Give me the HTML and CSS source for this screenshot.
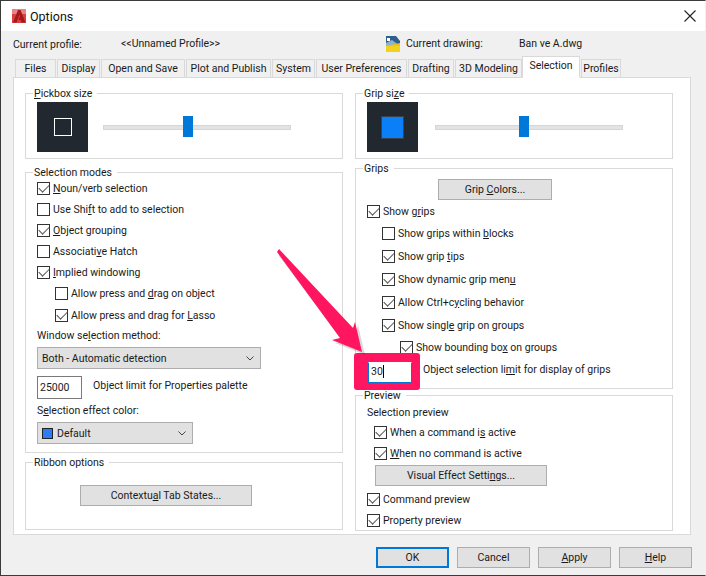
FILE: index.html
```html
<!DOCTYPE html>
<html lang="en">
<head>
<meta charset="utf-8">
<title>Options</title>
<link rel="stylesheet" href="styles.css">
</head>
<body>
<div class="dialog">
  <header class="titlebar">
    <svg class="app-icon" width="16" height="16" viewBox="0 0 16 16"><rect x="1" y="1" width="14" height="14" fill="#d9413f"/><rect x="1" y="1" width="14" height="5" fill="#e98482"/><path d="M2 14.5 7 2h2.5L14.5 14.5h-4L9.7 12H7.5l1-3h.6L8.4 6.5 5.6 14.5z" fill="#a8171c"/></svg>
    <span class="title">Options</span>
    <svg class="close" width="12" height="12" viewBox="0 0 12 12"><path d="M.5.5l11 11M11.5.5l-11 11" stroke="#222" stroke-width="1.1" fill="none"/></svg>
  </header>
  <div class="content">
    <div class="profile">
      <span class="p-label">Current profile:</span>
      <span class="p-name">&lt;&lt;Unnamed Profile&gt;&gt;</span>
      <svg class="dwg-icon" width="16" height="17" viewBox="0 0 16 17"><rect x="1" y="11" width="14" height="6" fill="#f2d21e"/><path d="M1 11V1h10l4 5v5z" fill="#2f5f8a"/><path d="M1 11 1 8l6-3 8 6z" fill="#8fb3cf"/><path d="M2 3h3v3H2z" fill="#fff"/><path d="M1 11l14-3v3z" fill="#e8c51a"/></svg>
      <span class="d-label">Current drawing:</span>
      <span class="d-name">Ban ve A.dwg</span>
    </div>
    <nav class="tabs">
      <span class="tab t-files">Files</span>
      <span class="tab t-display">Display</span>
      <span class="tab t-open">Open and Save</span>
      <span class="tab t-plot">Plot and Publish</span>
      <span class="tab t-system">System</span>
      <span class="tab t-user">User Preferences</span>
      <span class="tab t-draft">Drafting</span>
      <span class="tab t-model">3D Modeling</span>
      <span class="tab t-sel active">Selection</span>
      <span class="tab t-prof">Profiles</span>
    </nav>
    <main class="panel">
      <div class="col">
        <fieldset class="group g-pick">
          <legend><u>P</u>ickbox size</legend>
          <div class="size-row">
            <div class="swatch"><span class="pickbox"></span></div>
            <div class="slider s-left"><span class="thumb"></span></div>
          </div>
        </fieldset>
        <fieldset class="group g-modes">
          <legend>Selection modes</legend>
          <label class="row first"><span class="cb on"></span><span><u>N</u>oun/verb selection</span></label>
          <label class="row"><span class="cb"></span><span>Use Shi<u>f</u>t to add to selection</span></label>
          <label class="row"><span class="cb on"></span><span><u>O</u>bject grouping</span></label>
          <label class="row"><span class="cb"></span><span>Associati<u>v</u>e Hatch</span></label>
          <label class="row"><span class="cb on"></span><span><u>I</u>mplied windowing</span></label>
          <label class="row in1"><span class="cb"></span><span>Allow press and <u>d</u>rag on object</span></label>
          <label class="row r22 in1"><span class="cb on"></span><span>Allow press and drag for <u>L</u>asso</span></label>
          <div class="caption c-win">Window se<u>l</u>ection method:</div>
          <div class="select sel-win"><span>Both - Automatic detection</span><svg class="chev" width="8" height="5" viewBox="0 0 8 5"><path d="M.5.5 4 4 7.500.5" stroke="#444" fill="none"/></svg></div>
          <div class="limit-row"><span class="input i-25">25000</span><span class="limit-label">Ob<u>j</u>ect limit for Properties palette</span></div>
          <div class="caption c-eff">S<u>e</u>lection effect color:</div>
          <div class="select sel-eff"><span class="color"></span><span>Default</span><svg class="chev" width="8" height="5" viewBox="0 0 8 5"><path d="M.5.5 4 4 7.500.5" stroke="#444" fill="none"/></svg></div>
        </fieldset>
        <fieldset class="group g-ribbon">
          <legend>Ribbon options</legend>
          <div class="btn b-ctx">Contextu<u>a</u>l Tab States...</div>
        </fieldset>
      </div>
      <div class="col">
        <fieldset class="group g-pick">
          <legend>Grip si<u>z</u>e</legend>
          <div class="size-row">
            <div class="swatch"><span class="gripbox"></span></div>
            <div class="slider s-right"><span class="thumb"></span></div>
          </div>
        </fieldset>
        <fieldset class="group g-grips">
          <legend>Grips</legend>
          <div class="btn b-grip">Grip <u>C</u>olors...</div>
          <label class="row r-sg"><span class="cb on"></span><span>Show g<u>r</u>ips</span></label>
          <label class="row r23 in-g"><span class="cb"></span><span>Show grips within <u>b</u>locks</span></label>
          <label class="row r23 in-g"><span class="cb on"></span><span>Show grip <u>t</u>ips</span></label>
          <label class="row r23 in-g"><span class="cb on"></span><span>Show dynamic grip men<u>u</u></span></label>
          <label class="row r23 in-g"><span class="cb on"></span><span>Allow Ctrl+c<u>y</u>cling behavior</span></label>
          <label class="row r22 in-g"><span class="cb on"></span><span>Show singl<u>e</u> grip on groups</span></label>
          <label class="row r23 in-gg"><span class="cb on"></span><span>Show bounding bo<u>x</u> on groups</span></label>
          <div class="limit-row l-grips"><span class="input i-30">30<i class="caret"></i></span><span class="limit-label">Object selection li<u>m</u>it for display of grips</span></div>
        </fieldset>
        <fieldset class="group g-preview">
          <legend>Preview</legend>
          <div class="caption c-prev">Selection preview</div>
          <label class="row in-p"><span class="cb on"></span><span>When a command i<u>s</u> active</span></label>
          <label class="row in-p"><span class="cb on"></span><span><u>W</u>hen no command is active</span></label>
          <div class="btn b-vis">Visual Effect Setti<u>n</u>gs...</div>
          <label class="row r-cmd"><span class="cb on"></span><span>Command preview</span></label>
          <label class="row"><span class="cb on"></span><span>Property preview</span></label>
        </fieldset>
      </div>
    </main>
    <footer class="actions">
      <div class="btn action default">OK</div>
      <div class="btn action">Cancel</div>
      <div class="btn action"><u>A</u>pply</div>
      <div class="btn action"><u>H</u>elp</div>
    </footer>
  </div>
  <div class="callout"></div>
  <svg class="arrow" width="100" height="120" viewBox="0 0 100 120">
    <polygon class="arrow-shadow" points="1,3 78,81 80,75 87,105 57,93 65,91 1,6"/>
    <polygon class="arrow-body" points="1,-1 75,78 77,72 84,102 54,90 62,88 -1,2"/>
  </svg>
</div>
</body>
</html>
```
FILE: styles.css
```css
* { box-sizing: border-box; }
html, body { margin: 0; padding: 0; }
body {
  width: 706px;
  height: 576px;
  overflow: hidden;
  font-family: Roboto, "Noto Sans", sans-serif;
  font-size: 10.5px;
  color: #1a1a1a;
}
u { text-underline-offset: 1px; }
.dialog {
  position: relative;
  width: 706px;
  height: 576px;
  background: #f0f0f0;
  border-top: 1px solid #3a3a3a;
  border-left: 1px solid #3a3a3a;
  border-right: 1px solid #f0f0f0;
  border-bottom: 1px solid #3a3a3a;
  display: flex;
  flex-direction: column;
}
.titlebar {
  height: 30px;
  flex: none;
  background: #fff;
  display: flex;
  align-items: center;
  padding: 0 9px 0 10px;
}
.app-icon { flex: none; }
.title { margin-left: 3px; font-size: 12.5px; color: #111; }
.close { margin-left: auto; }
.content { flex: 1; padding: 0 13px 0 12px; display: flex; flex-direction: column; }
.profile { height: 28px; display: flex; align-items: center; padding-bottom: 3px; }
.p-label { width: 108px; padding-top: 2px; }
.p-name { width: 264px; }
.dwg-icon { flex: none; width: 16px; margin-right: 5px; }
.d-label { width: 113px; }
.tabs { display: flex; height: 18px; padding-left: 2px; align-items: flex-end; }
.tab {
  height: 19px;
  margin-right: 1px;
  margin-bottom: -1px;
  background: #f0f0f0;
  border: 1px solid #d9d9d9;
  display: flex;
  align-items: center;
  justify-content: center;
  white-space: nowrap;
}
.t-files { width: 41px; }
.t-display { width: 43px; }
.t-open { width: 84px; }
.t-plot { width: 85px; }
.t-system { width: 43px; }
.t-user { width: 91px; }
.t-draft { width: 46px; }
.t-model { width: 67px; margin-right: 0; }
.t-sel { width: 58px; }
.t-prof { width: 40px; }
.tab.active {
  height: 22px;
  background: #fff;
  border-bottom-color: #fff;
  position: relative;
  z-index: 1;
  padding-bottom: 3px;
}
.panel {
  width: 678px;
  height: 458px;
  background: #fff;
  border: 1px solid #d9d9d9;
  padding: 7px 17px 0 11px;
  display: grid;
  grid-template-columns: 318px 318px;
  column-gap: 12px;
}
.col { display: flex; flex-direction: column; }
fieldset.group {
  margin: 0;
  padding: 0 0 0 11px;
  border: 1px solid #d9d9d9;
  min-width: 0;
}
legend { padding: 2px 5px 0 1px; margin-left: -4px; line-height: 14px; }
fieldset.g-pick { height: 74px; }
fieldset.g-modes { height: 289px; margin-top: 5px; }
fieldset.g-ribbon { height: 76px; margin-top: 1px; }
fieldset.g-grips { height: 229px; margin-top: 1px; }
fieldset.g-preview { height: 144px; margin-top: -2px; }
.size-row { display: flex; align-items: center; margin-top: 1px; }
.swatch {
  width: 51px; height: 50px; background: #212830;
  display: flex; align-items: center; justify-content: center;
  flex: none;
}
.pickbox { width: 18px; height: 18px; border: 1px solid #fff; }
.gripbox { width: 21px; height: 21px; background: #0a80f8; border: 1px solid #3a4048; box-sizing: content-box; }
.slider {
  height: 5px; background: #e3e3e3; border: 1px solid #d6d6d6;
  width: 188px; position: relative;
}
.s-left { margin-left: 15px; }
.s-right { margin-left: 17px; }
.thumb {
  position: absolute; left: 79px; top: -10px;
  width: 10px; height: 21px; background: #0078d7;
}
.s-right .thumb { left: 83px; }
.row { display: flex; align-items: center; height: 21px; white-space: nowrap; }
.row.first { margin-top: -2px; }
.r22 { height: 22px; }
.r23 { height: 23px; }
.cb {
  width: 13px; height: 13px; border: 1px solid #333; background: #fff;
  margin-right: 3px; flex: none; position: relative; display: block;
}
.cb.on::after {
  content: "";
  position: absolute; left: 1px; top: 1px;
  width: 9px; height: 5px;
  border-left: 1px solid #555; border-bottom: 1px solid #555;
  transform: rotate(-45deg);
  transform-origin: center;
}
.in1 { padding-left: 18px; }
.in-g { padding-left: 15px; }
.in-gg { padding-left: 33px; }
.in-p { padding-left: 7px; }
.caption { line-height: 14px; }
.c-win { margin-top: 3px; }
.select {
  height: 22px;
  background: #e1e1e1;
  border: 1px solid #adadad;
  display: flex;
  align-items: center;
  padding: 0 6px 0 4px;
}
.sel-win { width: 224px; margin-top: 4px; }
.sel-eff { width: 156px; margin-top: 4px; }
.chev { margin-left: auto; }
.color { width: 9px; height: 9px; background: #2e7bf6; border: 1px solid #222; margin-right: 4px; box-sizing: content-box; }
.limit-row { display: flex; align-items: center; margin-top: 7px; }
.limit-row .input { margin-right: 11px; }
.limit-label { padding-bottom: 4px; }
.l-grips .limit-label { padding-bottom: 6px; }
.input {
  display: flex; align-items: center;
  height: 23px; width: 45px;
  border: 1px solid #7a7a7a; background: #fff; padding-left: 2px;
}
.c-eff { margin-top: 5px; }
.btn {
  background: #e1e1e1;
  border: 1px solid #adadad;
  display: flex;
  align-items: center;
  justify-content: center;
  height: 21px;
  white-space: pre;
}
.b-ctx { width: 172px; margin: 15px 0 0 43px; }
.b-grip { width: 114px; margin: 3px 0 0 71px; }
.r-sg { margin-top: 1px; }
.limit-row.l-grips { margin-top: 3px; margin-left: 1px; }
.l-grips .input {
  width: 44px; height: 21px;
  border: 1px solid #0078d7; border-top-color: #fff;
  margin-right: 11px; padding-bottom: 3px; position: relative; z-index: 3;
}
.caret { display: inline-block; width: 1px; height: 13px; background: #000; }
.c-prev { margin-top: 3px; margin-bottom: 2px; }
.b-vis { width: 172px; margin: 1px 0 0 8px; }
.r-cmd { margin-top: 3px; }
.actions {
  display: flex; gap: 8px; justify-content: flex-end; padding-top: 12px;
}
.action { width: 73px; height: 21px; }
.action.default { border: 2px solid #0078d7; }
.callout {
  position: absolute; left: 353px; top: 352px;
  width: 66px; height: 37px;
  border-radius: 3px;
  background: #ff1560;
  z-index: 2;
}
.arrow { position: absolute; left: 277px; top: 249px; z-index: 2; overflow: visible; }
.arrow-body { fill: #ff1560; }
.arrow-shadow { fill: rgba(0,0,0,.15); }
```
